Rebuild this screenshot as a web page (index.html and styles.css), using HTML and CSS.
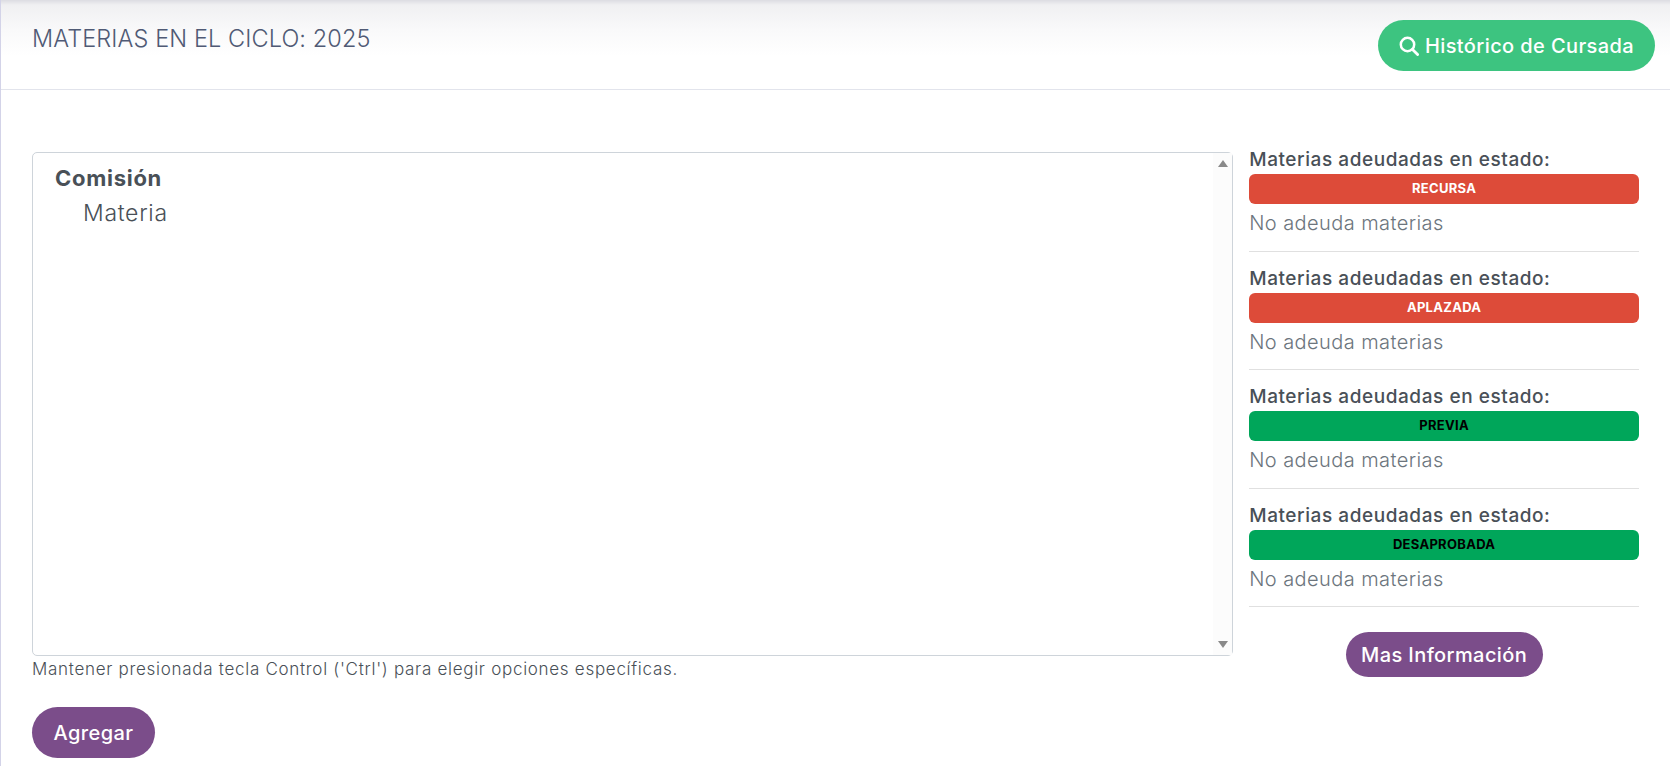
FILE: index.html
```html
<!DOCTYPE html>
<html lang="es">
  <head>
    <meta charset="UTF-8" />
    <title>Materias en el ciclo</title>
    <link rel="stylesheet" href="styles.css">
  </head>
  <body>
    <div class="page">
      <header class="page-header">
        <h1>MATERIAS EN EL CICLO: 2025</h1>
        <button class="btn btn-green">
          <svg class="icon-search" viewBox="0 0 20 20" width="20" height="20" aria-hidden="true">
            <circle cx="8.5" cy="8.5" r="6.7" fill="none" stroke="currentColor" stroke-width="2.5" />
            <path d="M13.5 13.5 L18.6 18.6" fill="none" stroke="currentColor" stroke-width="2.8" stroke-linecap="round" />
          </svg>
          Histórico de Cursada
        </button>
      </header>

      <main class="content">
        <section class="main-col">
          <div class="list-box">
            <div class="list-inner">
              <div class="group-label">Comisión</div>
              <div class="group-option">Materia</div>
            </div>
            <div class="scroll-track">
              <span class="arrow arrow-up"></span>
              <span class="arrow arrow-down"></span>
            </div>
          </div>
          <p class="hint">Mantener presionada tecla Control ('Ctrl') para elegir opciones específicas.</p>
          <button class="btn btn-purple btn-add">Agregar</button>
        </section>

        <aside class="side-col">
          <div class="debt">
            <div class="debt-title">Materias adeudadas en estado:</div>
            <div class="badge badge-red">RECURSA</div>
            <div class="debt-empty">No adeuda materias</div>
          </div>
          <div class="debt">
            <div class="debt-title">Materias adeudadas en estado:</div>
            <div class="badge badge-red">APLAZADA</div>
            <div class="debt-empty">No adeuda materias</div>
          </div>
          <div class="debt">
            <div class="debt-title">Materias adeudadas en estado:</div>
            <div class="badge badge-green">PREVIA</div>
            <div class="debt-empty">No adeuda materias</div>
          </div>
          <div class="debt">
            <div class="debt-title">Materias adeudadas en estado:</div>
            <div class="badge badge-green">DESAPROBADA</div>
            <div class="debt-empty">No adeuda materias</div>
          </div>
          <div class="side-actions">
            <button class="btn btn-purple btn-info">Mas Información</button>
          </div>
        </aside>
      </main>
    </div>
  </body>
</html>
```

FILE: styles.css
```css
* {
  box-sizing: border-box;
}

html,
body {
  margin: 0;
  padding: 0;
  height: 100%;
}

body {
  font-family: "Inter", "Open Sans", sans-serif;
  background: #fff;
  color: #495057;
  overflow: hidden;
}

.page {
  height: 766px;
  border-left: 1px solid #d3d3e8;
}

.page-header {
  height: 90px;
  padding: 20px 15px 0 31px;
  display: flex;
  justify-content: space-between;
  align-items: flex-start;
  border-bottom: 1px solid #e2e4ec;
  background: linear-gradient(180deg, #dcdce2 0, #f0f0f2 5px, #f9f9fa 30px, #fff 56px);
}

h1 {
  margin: 4px 0 0;
  font-size: 23.5px;
  line-height: 30px;
  font-weight: 300;
  letter-spacing: 0.1px;
  color: #505a75;
}

.btn {
  border: none;
  color: #fff;
  font-family: inherit;
  font-weight: 500;
  font-size: 20px;
  letter-spacing: 0.4px;
  cursor: pointer;
}

.btn-green {
  width: 277px;
  height: 51px;
  border-radius: 26px;
  background: #3dc480;
  display: flex;
  align-items: center;
  justify-content: center;
  gap: 6px;
}

.btn-purple {
  background: #7b4d8a;
}

.content {
  display: flex;
  padding: 62px 31px 0 31px;
  gap: 16px;
}

.main-col {
  width: 1202px;
}

.list-box {
  height: 504px;
  border: 1px solid #ced4da;
  border-radius: 5px;
  display: flex;
}

.list-inner {
  flex: 1;
  padding: 12px 0 0 22px;
}

.group-label {
  font-size: 22px;
  line-height: 26px;
  font-weight: 700;
  letter-spacing: 0.72px;
}

.group-option {
  margin-top: 9px;
  padding-left: 28px;
  font-size: 23px;
  line-height: 26px;
  font-weight: 300;
  letter-spacing: 0.7px;
}

.scroll-track {
  width: 19px;
  background: #fcfcfc;
  display: flex;
  flex-direction: column;
  justify-content: space-between;
  align-items: center;
  padding: 7px 0;
}

.arrow {
  width: 0;
  height: 0;
  border-left: 5px solid transparent;
  border-right: 5px solid transparent;
}

.arrow-up {
  border-bottom: 7px solid #8a8a8a;
}

.arrow-down {
  border-top: 7px solid #8a8a8a;
}

.hint {
  margin: 1px 0 0;
  font-size: 17px;
  line-height: 24px;
  font-weight: 300;
  letter-spacing: 0.71px;
}

.btn-add {
  display: block;
  margin-top: 26px;
  width: 123px;
  height: 51px;
  border-radius: 26px;
}

.side-col {
  width: 390px;
  margin-top: -6px;
}

.debt {
  height: 105.5px;
  margin-bottom: 13px;
  border-bottom: 1px solid #e0e0e0;
}

.debt-title {
  height: 28px;
  font-size: 19px;
  line-height: 28px;
  font-weight: 500;
  letter-spacing: 0.56px;
}

.badge {
  height: 30px;
  border-radius: 6px;
  font-size: 13px;
  line-height: 29px;
  font-weight: 700;
  letter-spacing: 0.3px;
  text-align: center;
}

.badge-red {
  background: #dd4b39;
  color: #fff;
}

.badge-green {
  background: #00a65a;
  color: #000;
}

.debt-empty {
  margin-top: 6px;
  font-size: 20px;
  line-height: 26px;
  font-weight: 300;
  letter-spacing: 0.42px;
  color: #6c757d;
}

.side-actions {
  display: flex;
  justify-content: center;
  padding-top: 12px;
}

.btn-info {
  width: 197px;
  height: 45px;
  border-radius: 23px;
}
```
